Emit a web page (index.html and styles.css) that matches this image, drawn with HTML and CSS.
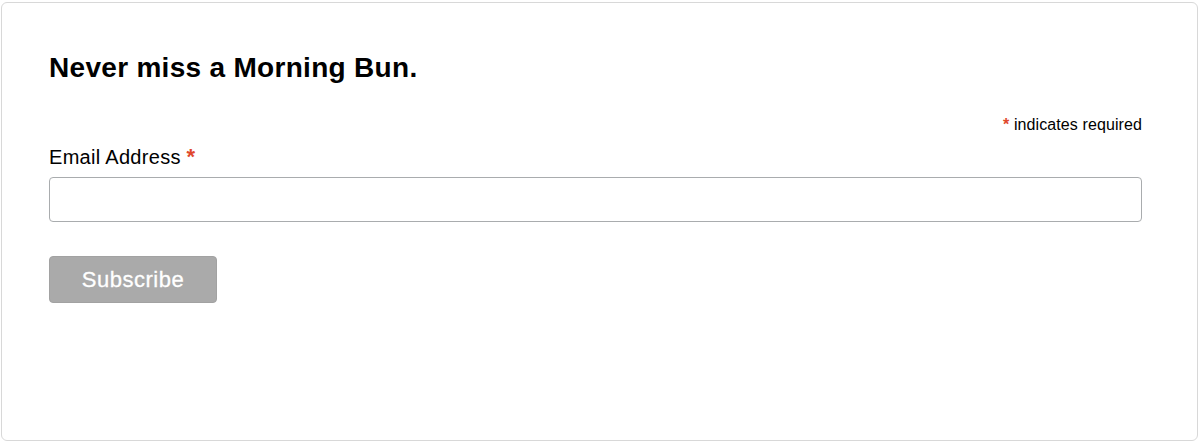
FILE: index.html
```html
<!DOCTYPE html>
<html>
<head>
<meta charset="utf-8">
<link rel="stylesheet" href="styles.css">
</head>
<body>
<div class="card">
  <h2 class="title">Never miss a Morning Bun.</h2>
  <div class="required-note"><span class="asterisk">*</span> indicates required</div>
  <label class="label" for="email">Email Address <span class="asterisk">*</span></label>
  <input class="input" type="email" id="email">
  <button class="button" type="button">Subscribe</button>
</div>
</body>
</html>
```
FILE: styles.css
```css
html, body {
  margin: 0;
  padding: 0;
  background: #fff;
}
body {
  font-family: "Liberation Sans", Arial, Helvetica, sans-serif;
  color: #000;
}
.card {
  box-sizing: border-box;
  margin: 2px 0 0 1px;
  width: 1197px;
  height: 439px;
  border: 1px solid #d8d8d8;
  border-radius: 6px;
  padding: 49px 55px 0 47px;
  display: flex;
  flex-direction: column;
}
.title {
  margin: 0;
  font-size: 28px;
  line-height: 32px;
  font-weight: bold;
  letter-spacing: 0.3px;
}
.required-note {
  margin-top: 31px;
  align-self: flex-end;
  font-size: 16px;
  line-height: 20px;
  letter-spacing: 0.1px;
}
.asterisk {
  color: #e0482c;
  font-weight: bold;
}
.label {
  margin-top: 10px;
  font-size: 20px;
  line-height: 24px;
  letter-spacing: 0.3px;
}
.label .asterisk {
  font-size: 22px;
}
.input {
  box-sizing: border-box;
  margin: 8px 0 0 0;
  width: 100%;
  height: 45px;
  border: 1px solid #a9acae;
  border-radius: 4px;
  padding: 0 10px;
  font-size: 18px;
}
.button {
  margin-top: 34px;
  align-self: flex-start;
  width: 168px;
  height: 47px;
  background: #aaaaaa;
  border: 1px solid #a2a2a2;
  border-radius: 4px;
  color: #fff;
  font-family: "Liberation Sans", Arial, Helvetica, sans-serif;
  font-size: 22px;
  letter-spacing: 0.5px;
  -webkit-text-stroke: 0.3px #fff;
  padding: 0;
}
```
